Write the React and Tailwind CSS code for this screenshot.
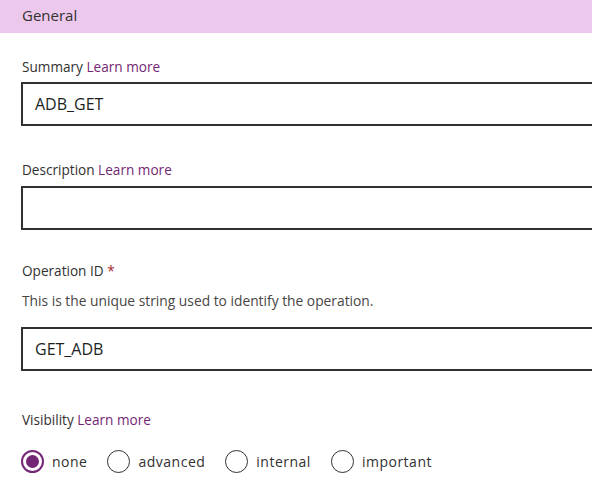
import React, {useState} from "react";

const font = {fontFamily: '"Open Sans", "Noto Sans", sans-serif'};

function Label({children, link}) {
    return (
        <div className="h-5 text-[13.6px] leading-5 text-[#323130]">
            {children}
            {link && <span className="text-[#742774]"> Learn more</span>}
        </div>
    );
}

function TextBox({value}) {
    return (
        <div className="h-[44px] w-[600px] border-2 border-[#323130] bg-white flex items-center pl-3 text-[16px] text-[#201f1e]">
            {value}
        </div>
    );
}

function Radio({label, checked, onClick}) {
    return (
        <button onClick={onClick} className="flex items-center gap-2 mr-5">
            <span
                className={
                    checked
                        ? "w-[23px] h-[23px] rounded-full border-2 border-[#742774] flex items-center justify-center"
                        : "w-[23px] h-[23px] rounded-full border-[1.5px] border-[#323130]"
                }
            >
                {checked && <span className="w-[13px] h-[13px] rounded-full bg-[#742774]"></span>}
            </span>
            <span className="text-[14px] tracking-[0.5px] text-[#323130]">{label}</span>
        </button>
    );
}

export default function App() {
    const [visibility, setVisibility] = useState("none");

    return (
        <div className="w-[592px] h-[483px] overflow-hidden bg-white" style={font}>
            {/* Section header */}
            <div className="h-[33px] bg-[#ecc8ec] pl-[22px] pt-[5px] text-[15px] leading-5 text-[#323130]">
                General
            </div>

            <div className="pl-[21px]">
                <div className="mt-[24px] mb-[5px] pl-px">
                    <Label link>Summary</Label>
                </div>
                <TextBox value="ADB_GET"/>

                <div className="mt-[34px] mb-[6px] pl-px">
                    <Label link>Description</Label>
                </div>
                <TextBox value=""/>

                <div className="mt-[31px] pl-px">
                    <Label>
                        Operation ID <span className="text-[#a4262c]">*</span>
                    </Label>
                </div>
                <p className="mt-[12px] mb-[18px] pl-px text-[13.8px] leading-4 text-[#484644]">
                    This is the unique string used to identify the operation.
                </p>
                <TextBox value="GET_ADB"/>

                <div className="mt-[39px] pl-px">
                    <Label link>Visibility</Label>
                </div>
                <div className="mt-[20px] flex items-center">
                    {["none", "advanced", "internal", "important"].map((v) => (
                        <Radio key={v} label={v} checked={visibility === v} onClick={() => setVisibility(v)}/>
                    ))}
                </div>
            </div>
        </div>
    );
}
